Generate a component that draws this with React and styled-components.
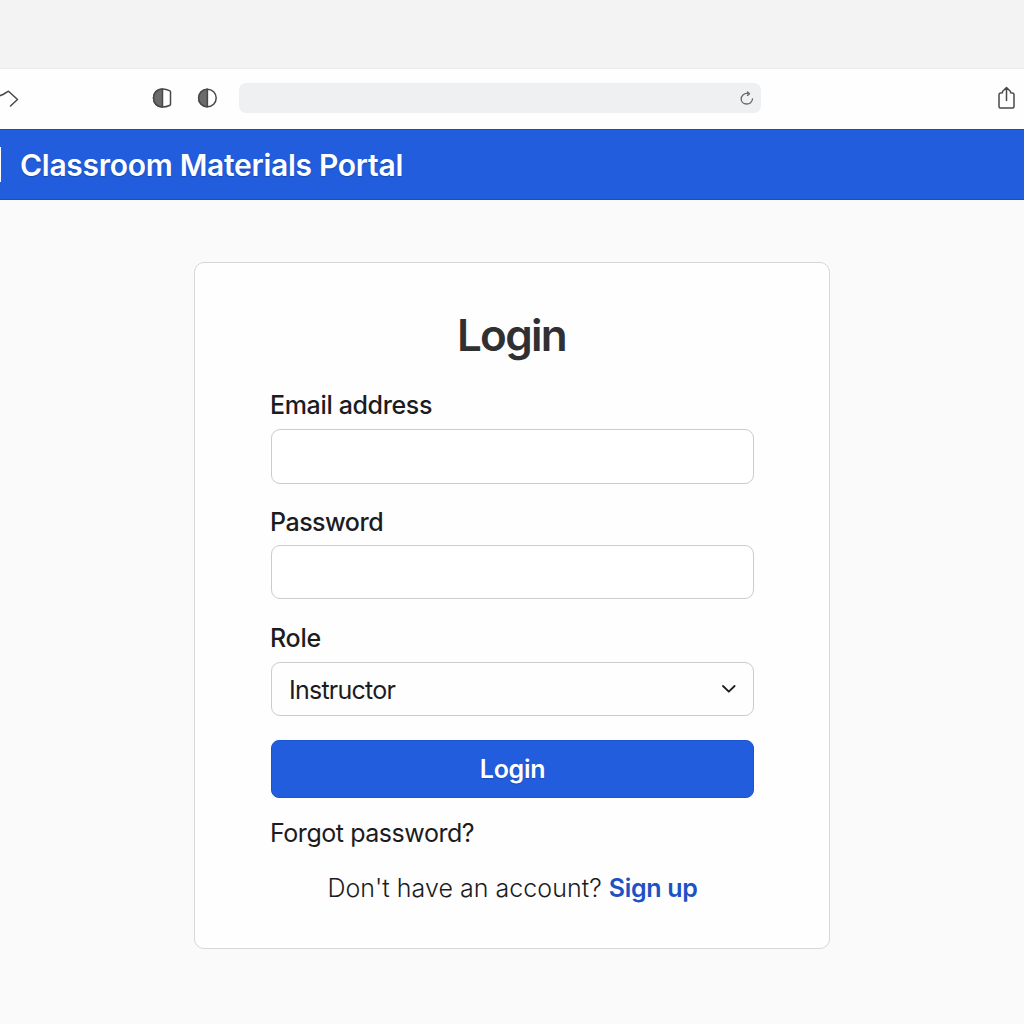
import React from 'react';
import styled, { createGlobalStyle } from 'styled-components';

const GlobalStyle = createGlobalStyle`
  * { box-sizing: border-box; }
  body { margin: 0; background: #fafafa; font-family: Inter, "Liberation Sans", sans-serif; color: #1c1c1e; overflow: hidden; }
`;
const Page = styled.div`display: flex; flex-direction: column; height: 1024px; width: 1024px; overflow: hidden;`;
const Desktop = styled.div`height: 69px; flex: none; background: #f3f3f3; border-bottom: 1px solid #ececec;`;
const Toolbar = styled.div`height: 60px; flex: none; background: #fefefe; display: flex; align-items: center; padding-bottom: 2px;`;
const Icon = styled.svg`
  flex: none; display: block; overflow: visible; fill: none; stroke: ${p => p.$color || '#48484a'}; stroke-width: ${p => p.$stroke || 1.5};
  stroke-linecap: round; stroke-linejoin: round;
  width: ${p => p.$w}px; height: ${p => p.$h}px; margin-left: ${p => p.$ml || 0}px;
`;
const Address = styled.div`
  width: 522px; height: 30px; margin-left: 22px; padding-right: 7px; border-radius: 7px; background: #eff0f2;
  display: flex; align-items: center; justify-content: flex-end;
`;
const Header = styled.header`
  height: 71px; flex: none; background: #215ddc; border-top: 1px solid #1c4db8; border-bottom: 1px solid #1c4fbd;
  display: flex; align-items: center; color: #fff;
`;
const Mark = styled.span`width: 1px; height: 35px; background: #fff;`;
const Brand = styled.span`
  margin-left: 19px; padding-top: 1px; font-size: 30px; line-height: 40px; font-weight: 600; white-space: nowrap; letter-spacing: -0.28px;
  text-shadow: 0 1px 1px rgba(16, 44, 120, 0.45);
`;
const Main = styled.main`flex: 1; display: flex; justify-content: center; align-items: flex-start; padding-top: 62px;`;
const Card = styled.form`
  width: 636px; height: 687px; background: #fefefe; border: 1px solid #d7d7d9; border-radius: 10px;
  padding: 46px 75px 0; display: flex; flex-direction: column;
`;
const Title = styled.h1`margin: 0; text-align: center; text-indent: -1px; font-size: 44px; line-height: 52px; font-weight: 600; letter-spacing: -1.7px; color: #303032;`;
const Label = styled.label`margin-top: ${p => p.$mt}px; height: 32px; line-height: 32px; font-size: 25px; font-weight: 500; letter-spacing: ${p => p.$ls}px;`;
const Input = styled.input`
  width: 483px; height: ${p => p.$h}px; margin: ${p => p.$mt}px 0 0 1px; border: 1px solid #cbccce; border-radius: 9px; background: #fff; padding: 0 18px; outline: none;
`;
const Select = styled.div`
  height: 54px; margin: 8px 0 0 1px; border: 1px solid #cbccce; border-radius: 9px; padding: 0 17px;
  display: flex; align-items: center; justify-content: space-between; font-size: 25px; letter-spacing: -0.75px;
`;
const SelectValue = styled.span`padding-top: 2px;`;
const Submit = styled.button`
  height: 58px; margin: 24px 0 0 1px; border: 1px solid #1c54cf; border-radius: 8px; background: #215ddc; color: #fff; padding: 0;
  font: 600 25px Inter, sans-serif; letter-spacing: -0.3px; text-shadow: 0 1px 1px rgba(16, 44, 120, 0.35);
`;
const Forgot = styled.a`margin-top: 18px; line-height: 34px; font-size: 25px; letter-spacing: -0.45px;`;
const Register = styled.p`margin: 21px 0 0 1px; text-align: center; line-height: 34px; font-size: 25px; font-weight: 300; white-space: nowrap; letter-spacing: 0.03px;`;
const SignUp = styled.a`color: #1d51c4; font-weight: 600; letter-spacing: -0.3px;`;

export default function App() {
  return (
    <>
      <GlobalStyle />
      <Page>
        <Desktop />
        <Toolbar>
          <Icon $w={20} $h={20} viewBox="0 0 20 20"><path d="M-1 8 3 6.500 8.500 3.200l9 8.300-7 6.500" /></Icon>
          <Icon $w={20} $h={20} $ml={132} viewBox="0 0 20 20"><path d="M10.500 1C5 1 1.500 5 1.500 10s3.500 9 9 9c3 0 5-.6 7.500-1.800.4-.2.5-.5.5-1V3.800c0-.5-.1-.8-.5-1C15.500 1.600 13.500 1 10.500 1Z" /><path d="M10.500 1C5 1 1.500 5 1.500 10s3.500 9 9 9Z" fill="#6b6b6d" /></Icon>
          <Icon $w={20} $h={20} $ml={25} viewBox="0 0 20 20"><circle cx="10.400" cy="10" r="8.800" /><path d="M10.400 1.200a8.800 8.800 0 0 0 0 17.600z" fill="#6b6b6d" /></Icon>
          <Address><Icon $w={14} $h={14} $stroke={1.300} $color="#66666a" viewBox="0 0 14 14"><path d="M7.500 2.500C3.800 2.200 1.200 4.800 1.200 8c0 3 2.300 5 5.300 5 3.200 0 5.500-2 6-5M7.500 1l2 1.800-2 1.600" /></Icon></Address>
          <Icon $w={18} $h={24} $ml={237} viewBox="0 0 18 24"><path d="M4.500 6.800 2.500 7C1.300 7.200 1 7.500 1 8.500v12c0 1 .3 1.500 1.300 1.500h12.400c1 0 1.300-.5 1.300-1.500v-12c0-1-.3-1.300-1.500-1.500l-2-.2M8.500 14.500V1.500M4.500 5.500l4-4 4 4" /></Icon>
        </Toolbar>
        <Header><Mark /><Brand>Classroom Materials Portal</Brand></Header>
        <Main>
          <Card>
            <Title>Login</Title>
            <Label $mt={28} $ls={-0.35}>Email address</Label><Input $mt={8} $h={55} />
            <Label $mt={22} $ls={-0.5}>Password</Label><Input $mt={7} $h={54} type="password" />
            <Label $mt={23} $ls={-0.25}>Role</Label>
            <Select><SelectValue>Instructor</SelectValue><Icon $w={14} $h={10} $stroke={1.800} $color="#1c1c1e" viewBox="0 0 14 10"><path d="m1 2 5.800 5.700L12.600 2" /></Icon></Select>
            <Submit type="button">Login</Submit>
            <Forgot>Forgot password?</Forgot>
            <Register>Don't have an account? <SignUp>Sign up</SignUp></Register>
          </Card>
        </Main>
      </Page>
    </>
  );
}
